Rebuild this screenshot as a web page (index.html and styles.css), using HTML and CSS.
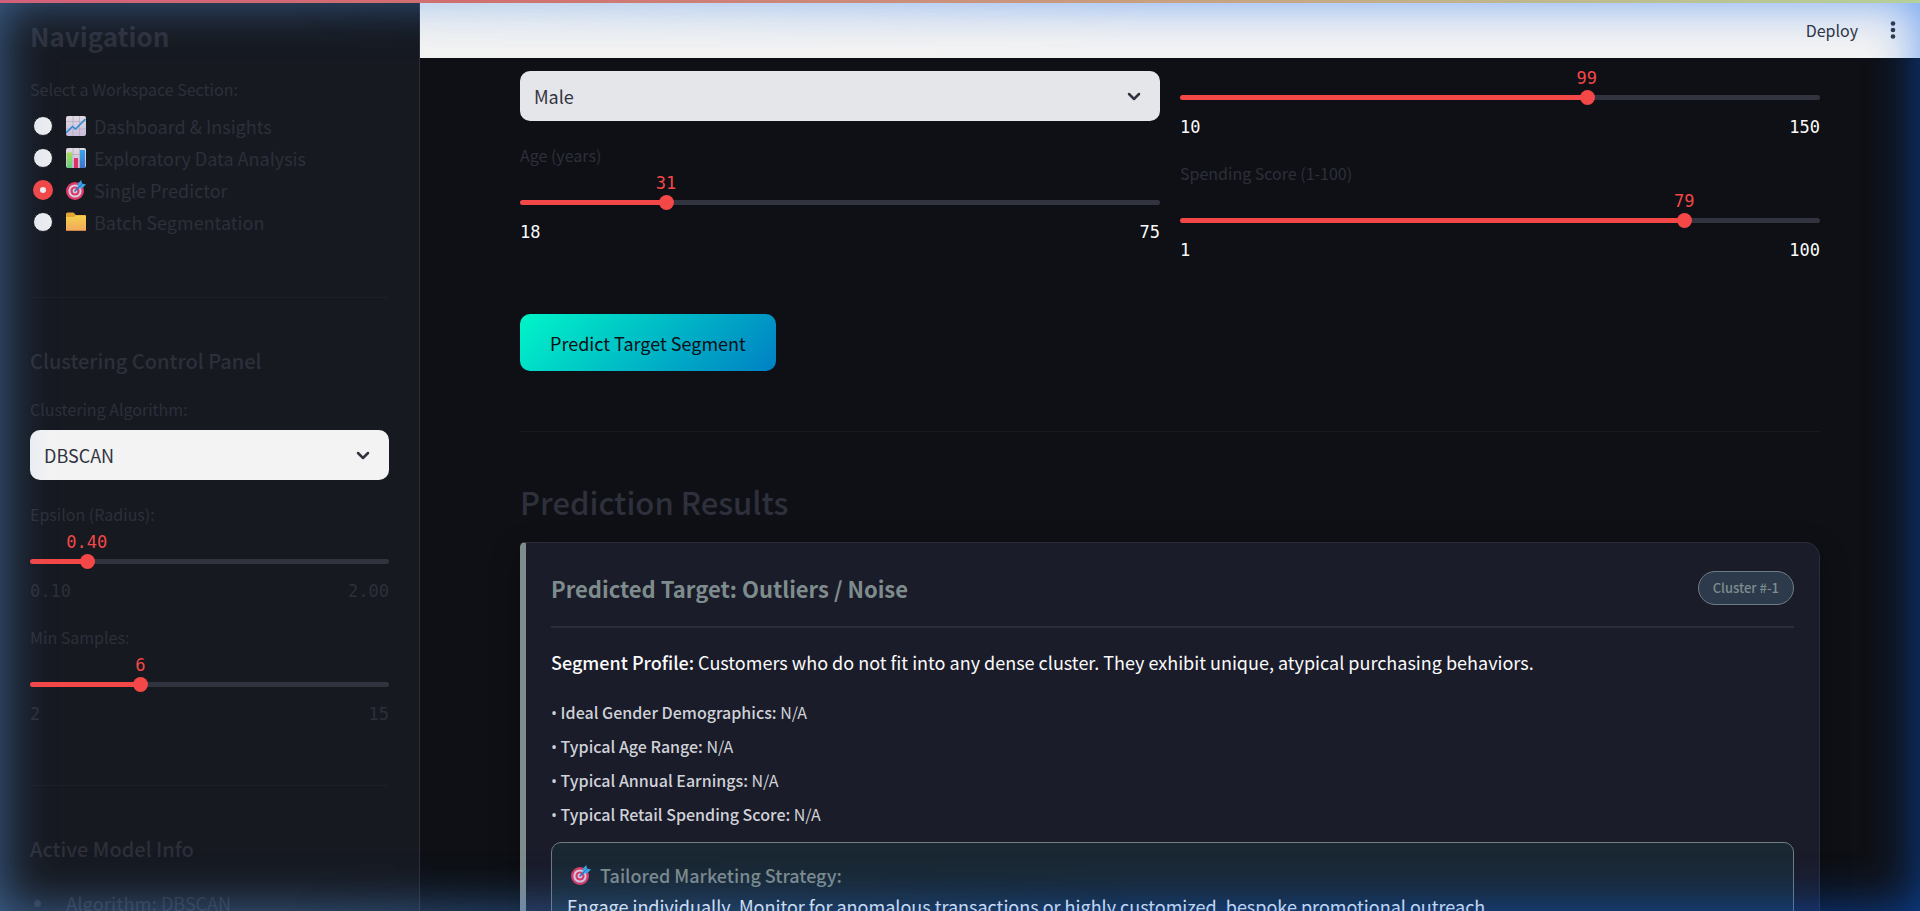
FILE: index.html
```html
<!DOCTYPE html>
<html lang="en">
<head>
<meta charset="utf-8">
<title>Single Predictor</title>
<link rel="stylesheet" href="styles.css">
</head>
<body>
<svg class="defs" width="0" height="0" aria-hidden="true">
  <defs>
    <linearGradient id="paper" x1="0" y1="0" x2="0" y2="1"><stop offset="0" stop-color="#dedae2"/><stop offset="1" stop-color="#c9bcdb"/></linearGradient>
    <linearGradient id="green" x1="0" y1="0" x2="0" y2="1"><stop offset="0" stop-color="#a5e04f"/><stop offset="1" stop-color="#5fd07f"/></linearGradient>
    <linearGradient id="blue" x1="0" y1="0" x2="0" y2="1"><stop offset="0" stop-color="#35a6ea"/><stop offset="1" stop-color="#3d74c8"/></linearGradient>
    <linearGradient id="gold" x1="0" y1="0" x2="0" y2="1"><stop offset="0" stop-color="#f5d04c"/><stop offset="1" stop-color="#f2ab5c"/></linearGradient>
    <symbol id="target" viewBox="0 0 20 20">
      <circle cx="9" cy="11" r="9" fill="#dc3a68"/>
      <circle cx="9" cy="11" r="6.6" fill="#d9cde0"/>
      <circle cx="9" cy="11" r="4.6" fill="#dc3a68"/>
      <circle cx="9" cy="11" r="2.4" fill="#d9cde0"/>
      <path d="M9 11l6-6" stroke="#2c6fb5" stroke-width="1.6" stroke-linecap="round"/>
      <path d="M11.6 8.4l.2-4.6L15.200 0l.8 3.600 4 1-3.800 3.600z" fill="#3ba4e6"/>
      <path d="M12 8l4-4" stroke="#2477bd" stroke-width="1"/>
    </symbol>
  </defs>
</svg>
<div class="app">
  <aside class="sidebar">
    <h2 class="side-title">Navigation</h2>
    <fieldset class="nav">
      <legend class="label">Select a Workspace Section:</legend>
      <label class="option"><input type="radio" name="section">
        <svg class="emoji" viewBox="0 0 20 20"><rect width="20" height="20" rx="2" fill="url(#paper)"/><path d="M7 0v20M13.500 0v20M0 5.500h20M0 13h20" stroke="#b4a8bd" stroke-width=".7"/><path d="M0 17l6.500-6.500L9.500 13 19.500 3" fill="none" stroke="#2f8bd6" stroke-width="1.600"/></svg>
        <span>Dashboard &amp; Insights</span></label>
      <label class="option"><input type="radio" name="section">
        <svg class="emoji" viewBox="0 0 20 20"><rect width="20" height="20" rx="2" fill="url(#paper)"/><path d="M7 0v20M13.500 0v20M0 6.500h20M0 13h20" stroke="#b4a8bd" stroke-width=".7"/><path d="M1 4.500h5V20H1z" fill="url(#green)"/><path d="M8 10h4v10H8z" fill="#dc3169"/><path d="M14 2h5v18h-5z" fill="url(#blue)"/></svg>
        <span>Exploratory Data Analysis</span></label>
      <label class="option"><input type="radio" name="section" checked>
        <svg class="emoji"><use href="#target"/></svg>
        <span>Single Predictor</span></label>
      <label class="option"><input type="radio" name="section">
        <svg class="emoji" viewBox="0 0 20 20"><path d="M1.500.5H7.500L10 3h8.500A1.500 1.500 0 0 1 20 4.500V19H0V2A1.500 1.500 0 0 1 1.500.5z" fill="#e3a535"/><path d="M0 5h8l2-1.500h10V18H0z" fill="url(#gold)"/><path d="M0 18h20v1H0z" fill="#cf8748"/></svg>
        <span>Batch Segmentation</span></label>
    </fieldset>
    <hr class="rule">
    <h3 class="side-heading">Clustering Control Panel</h3>
    <div class="field">
      <label class="label" for="algo">Clustering Algorithm:</label>
      <div class="picker">
        <select id="algo"><option>DBSCAN</option></select>
        <svg class="chevron" viewBox="0 0 14 9"><path d="M2 2l5 5 5-5"/></svg>
      </div>
    </div>
    <div class="field slider" style="--p:15.79%">
      <label class="label" for="eps">Epsilon (Radius):</label>
      <output class="value" for="eps">0.40</output>
      <div class="rail"><input type="range" id="eps" min="0.1" max="2" step="0.05" value="0.4"></div>
      <div class="ticks"><span>0.10</span><span>2.00</span></div>
    </div>
    <div class="field slider" style="--p:30.77%">
      <label class="label" for="mins">Min Samples:</label>
      <output class="value" for="mins">6</output>
      <div class="rail"><input type="range" id="mins" min="2" max="15" value="6"></div>
      <div class="ticks"><span>2</span><span>15</span></div>
    </div>
    <hr class="rule">
    <h3 class="side-heading">Active Model Info</h3>
    <ul class="info"><li><strong>Algorithm:</strong> DBSCAN</li></ul>
  </aside>

  <div class="page">
    <header class="toolbar">
      <button class="deploy" type="button">Deploy</button>
      <button class="menu" type="button" aria-label="Main menu"><svg viewBox="0 0 6 18"><circle cx="3" cy="2.500" r="2.300"/><circle cx="3" cy="9" r="2.300"/><circle cx="3" cy="15.500" r="2.300"/></svg></button>
    </header>
    <main class="content">
      <form class="form">
        <div class="column profile-inputs">
          <div class="picker muted">
            <select aria-label="Gender"><option>Male</option></select>
            <svg class="chevron" viewBox="0 0 14 9"><path d="M2 2l5 5 5-5"/></svg>
          </div>
          <div class="field slider" style="--p:22.81%">
            <label class="label" for="age">Age (years)</label>
            <output class="value" for="age">31</output>
            <div class="rail"><input type="range" id="age" min="18" max="75" value="31"></div>
            <div class="ticks"><span>18</span><span>75</span></div>
          </div>
        </div>
        <div class="column">
          <div class="field slider" style="--p:63.57%">
            <output class="value" for="income">99</output>
            <div class="rail"><input type="range" id="income" aria-label="Annual income" min="10" max="150" value="99"></div>
            <div class="ticks"><span>10</span><span>150</span></div>
          </div>
          <div class="field slider" style="--p:78.79%">
            <label class="label" for="score">Spending Score (1-100)</label>
            <output class="value" for="score">79</output>
            <div class="rail"><input type="range" id="score" min="1" max="100" value="79"></div>
            <div class="ticks"><span>1</span><span>100</span></div>
          </div>
        </div>
      </form>
      <button class="predict" type="button">Predict Target Segment</button>
      <hr class="rule">
      <h2 class="results-title">Prediction Results</h2>
      <section class="card">
        <div class="card-head">
          <h3>Predicted Target: Outliers / Noise</h3>
          <span class="badge">Cluster #-1</span>
        </div>
        <p class="profile"><strong>Segment Profile:</strong> Customers who do not fit into any dense cluster. They exhibit unique, atypical purchasing behaviors.</p>
        <div class="facts">
          <p><span class="dot">•</span> <strong>Ideal Gender Demographics:</strong> N/A</p>
          <p><span class="dot">•</span> <strong>Typical Age Range:</strong> N/A</p>
          <p><span class="dot">•</span> <strong>Typical Annual Earnings:</strong> N/A</p>
          <p><span class="dot">•</span> <strong>Typical Retail Spending Score:</strong> N/A</p>
        </div>
        <div class="strategy">
          <h4><svg class="emoji"><use href="#target"/></svg>Tailored Marketing Strategy:</h4>
          <p>Engage individually. Monitor for anomalous transactions or highly customized, bespoke promotional outreach.</p>
        </div>
      </section>
    </main>
  </div>
</div>
<div class="glow glow-left"></div>
<div class="glow glow-right"></div>
<div class="topline"></div>
</body>
</html>
```
FILE: styles.css
```css
* { box-sizing: border-box; }
html, body { height: 100%; }
body {
  margin: 0;
  overflow: hidden;
  background: #0e1015;
  color: #fafafa;
  font: 18px/30px "Noto Sans CJK SC", "Noto Sans", sans-serif;
}
h2, h3, h4, p, ul { margin: 0; padding: 0; }
button, select, input { font: inherit; margin: 0; }
.defs { display: block; position: absolute; }
.app { display: flex; height: 100vh; }

.sidebar {
  flex: 0 0 420px;
  height: 100vh;
  overflow: hidden;
  padding: 18px 30px 0;
  background: #161920;
  border-right: 1px solid #2c2e39;
  color: #2d2f3a;
}
.side-title { font-size: 26px; line-height: 36px; font-weight: 700; }
.side-heading { margin-top: 48px; font-size: 20px; line-height: 30px; font-weight: 500; }
.label { display: block; padding: 0; font-size: 16px; line-height: 26px; color: #2d2f3a; }
.nav { margin: 22px 0 0; padding: 0; border: 0; }
.nav .label { margin-bottom: 8px; }
.option { display: flex; align-items: center; height: 32px; padding-left: 3px; }
.option span { margin-left: 8px; }
.option input {
  appearance: none;
  width: 20px;
  height: 20px;
  border: 1px solid #161920;
  border-radius: 50%;
  background: #ecedf0;
}
.option input:checked { border: 7px solid #f44747; }
.option .emoji { margin-left: 13px; }
.emoji { width: 20px; height: 20px; display: block; }
.rule { margin: 0; border: 0; border-top: 1px solid #1c1f27; }
.sidebar .rule { margin-top: 59px; }

.side-heading + .field { margin-top: 20px; }
.field + .field, .picker + .field { margin-top: 21px; }
.slider .label { margin-bottom: 3px; }
.picker { position: relative; }
.label + .picker { margin-top: 8px; }
.picker select {
  appearance: none;
  display: block;
  width: 100%;
  height: 50px;
  padding: 0 14px;
  border: 0;
  border-radius: 10px;
  background: #f3f3f3;
  color: #31333f;
}
.picker.muted select { background: #e5e6ea; }
.chevron {
  position: absolute;
  right: 19px;
  top: 21px;
  width: 14px;
  height: 9px;
  fill: none;
  stroke: #31333f;
  stroke-width: 2.5;
  stroke-linecap: round;
  stroke-linejoin: round;
}

.value, .ticks { font-family: "DejaVu Sans Mono", "Liberation Mono", monospace; font-size: 17px; line-height: 24px; }
.value {
  display: block;
  width: max-content;
  margin-left: var(--p);
  transform: translateX(-50%);
  color: #f44747;
}
.rail {
  display: flex;
  align-items: center;
  height: 5px;
  margin-top: 5px;
  border-radius: 3px;
  background: linear-gradient(to right, #f44747 var(--p), #31343f var(--p));
}
.rail input {
  appearance: none;
  flex: none;
  width: calc(100% + 15px);
  height: 15px;
  margin: 0 -8px 0 -7px;
  background: none;
}
.rail input::-webkit-slider-thumb {
  appearance: none;
  width: 15px;
  height: 15px;
  border-radius: 50%;
  background: #f44747;
}
.ticks { display: flex; justify-content: space-between; margin-top: 15px; }

.info { margin-top: 24px; padding-left: 36px; list-style: none; }
.info li { position: relative; }
.info li::before {
  content: "";
  position: absolute;
  left: -32px;
  top: 12px;
  width: 7px;
  height: 7px;
  border-radius: 50%;
  background: currentColor;
}

.page { flex: 1; min-width: 0; height: 100vh; overflow: hidden; }
.toolbar {
  display: flex;
  justify-content: flex-end;
  align-items: center;
  gap: 32px;
  height: 58px;
  padding: 2px 24px 0 0;
  background: #f3f3f3;
}
.toolbar button { padding: 0; border: 0; background: none; color: #31333f; font-size: 16px; line-height: 26px; }
.menu svg { display: block; width: 6px; height: 18px; fill: #31333f; }
.content { padding: 8px 100px 0; }
.form { display: grid; grid-template-columns: 1fr 1fr; gap: 20px; }
.profile-inputs { padding-top: 5px; }
.content .ticks { color: #fafafa; }
.predict {
  display: block;
  margin-top: 52px;
  height: 57px;
  padding: 0 30px;
  border: 0;
  border-radius: 10px;
  background: linear-gradient(135deg, #00f5c8, #0080c4);
  color: #0e1015;
}
.content .rule { margin-top: 60px; border-color: #181a1f; }
.results-title { margin-top: 48px; font-size: 31px; line-height: 44px; font-weight: 500; color: #2e303c; }
.card {
  margin-top: 18px;
  padding: 28px 25px 25px;
  border: 1px solid #2a2d3a;
  border-left: 6px solid #7f8c8d;
  border-radius: 15px;
  border-top-left-radius: 5px;
  background: #1a1c2a;
  box-shadow: 0 10px 30px rgba(0, 0, 0, .3);
}
.card-head {
  display: flex;
  justify-content: space-between;
  align-items: center;
  padding-bottom: 21px;
  border-bottom: 2px solid #2a2d3a;
}
.card-head h3 { font-size: 22px; line-height: 34px; color: #7f8c8d; }
.badge {
  height: 34px;
  padding: 0 14px;
  border: 1px solid #6f7c80;
  border-radius: 17px;
  background: #2c3a4b;
  color: #7f8c8d;
  font-size: 13px;
  line-height: 32px;
  font-weight: 500;
}
.profile { margin-top: 19px; }
strong { font-weight: 500; }
.facts { margin-top: 18px; font-size: 16px; color: #d0d2d8; }
.facts p { line-height: 34px; }
.dot { font-family: "Open Sans", sans-serif; line-height: 1; }
.strategy {
  margin-top: 11px;
  padding: 16px 15px;
  border: 1px solid #6f7c80;
  border-radius: 10px;
  background: #1a2833;
}
.strategy h4 { display: flex; align-items: center; gap: 9px; padding-left: 4px; font-size: 18px; line-height: 32px; font-weight: 500; color: #7f8c8d; }
.strategy p { color: #fafafa; }

.glow { position: fixed; inset: 0; pointer-events: none; }
.glow-left {
  box-shadow: inset 0 0 50px rgba(90, 153, 226, .6);
  mask-image: linear-gradient(to right, #000 15%, transparent 60%);
}
.glow-right {
  box-shadow: inset 0 0 50px rgba(10, 100, 240, .6);
  mask-image: linear-gradient(to right, transparent 15%, #000 60%);
}
.topline {
  position: fixed;
  inset: 0 0 auto;
  height: 3px;
  background: linear-gradient(to right, #d2607a, #d07070 25%, #c9a080 60%, #b5d09a);
}
```
